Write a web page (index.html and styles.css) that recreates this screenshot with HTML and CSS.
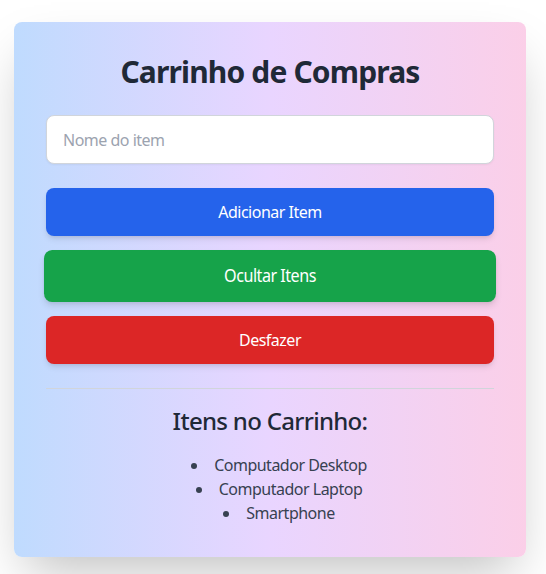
FILE: index.html
```html
<!DOCTYPE html>
<html lang="pt">
<head>
<meta charset="utf-8">
<title>Carrinho de Compras</title>
<link rel="stylesheet" href="styles.css">
</head>
<body>
<main class="page">
  <section class="card">
    <h1 class="title">Carrinho de Compras</h1>
    <input class="field" type="text" placeholder="Nome do item">
    <button class="btn btn-blue">Adicionar Item</button>
    <button class="btn btn-green">Ocultar Itens</button>
    <button class="btn btn-red">Desfazer</button>
    <hr class="divider">
    <h2 class="subtitle">Itens no Carrinho:</h2>
    <ul class="list">
      <li>Computador Desktop</li>
      <li>Computador Laptop</li>
      <li>Smartphone</li>
    </ul>
  </section>
</main>
</body>
</html>
```
FILE: styles.css
```css
* { box-sizing: border-box; }
html, body { margin: 0; padding: 0; background: #ffffff; }
body {
  font-family: "Noto Sans", "Open Sans", sans-serif;
  color: #1f2937;
  letter-spacing: -0.5px;
}
.page {
  padding: 22px 20px 17px 14px;
}
.card {
  width: 512px;
  padding: 32px;
  border-radius: 8px;
  background: linear-gradient(to right, #bfdbfe, #e9d5ff, #fbcfe8);
  box-shadow: 0 25px 50px -12px rgba(0,0,0,0.25);
  display: flex;
  flex-direction: column;
}
.title {
  margin: 0 0 24px;
  font-size: 30px;
  line-height: 36px;
  font-weight: 700;
  letter-spacing: -0.85px;
  text-align: center;
  color: #1f2937;
}
.field {
  display: block;
  width: 100%;
  height: 49px;
  margin: 1px 0 24px;
  padding: 0 16px;
  border: 1px solid #d1d5db;
  border-radius: 8px;
  background: #fff;
  font: inherit;
  font-size: 16px;
  letter-spacing: -0.5px;
  color: #1f2937;
  box-shadow: 0 1px 2px rgba(0,0,0,0.05);
  outline: none;
}
.field::placeholder { color: #9ca3af; }
.btn {
  display: block;
  width: 100%;
  height: 48px;
  border: 0;
  border-radius: 8px;
  font: inherit;
  font-size: 16px;
  line-height: 24px;
  letter-spacing: -0.5px;
  color: #fff;
  box-shadow: 0 4px 6px -1px rgba(0,0,0,0.1), 0 2px 4px -2px rgba(0,0,0,0.1);
  margin-bottom: 16px;
}
.btn-blue { background: #2563eb; }
.btn-green { background: #16a34a; transform: scale(1.009, 1.083); }
.btn-red { background: #dc2626; margin-bottom: 24px; }
.divider {
  margin: 0 0 16px;
  border: 0;
  border-top: 1px solid #d1d5db;
  height: 0;
}
.subtitle {
  margin: 0 0 16px;
  font-size: 24px;
  line-height: 32px;
  font-weight: 500;
  letter-spacing: -0.7px;
  text-align: center;
  color: #1f2937;
}
.list {
  margin: 0;
  padding: 0 0 0 18px;
  list-style: disc inside;
  text-align: center;
  font-size: 16px;
  line-height: 24px;
  color: #374151;
}
.list li::marker { letter-spacing: 0; }
```
